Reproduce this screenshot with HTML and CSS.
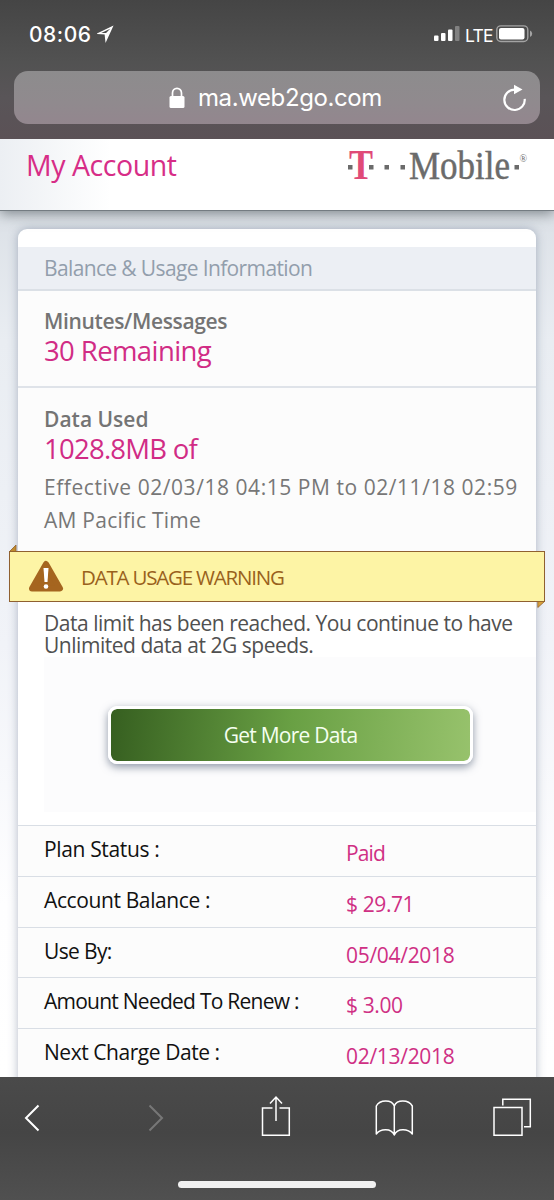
FILE: index.html
```html
<!DOCTYPE html>
<html lang="en">
<head>
<meta charset="utf-8">
<title>My Account</title>
<link rel="stylesheet" href="styles.css">
</head>
<body>
<div class="phone">
  <div class="chrome">
    <div class="status">
      <span class="time">08:06</span>
      <svg class="loc" width="18" height="18" viewBox="0 0 18 18"><path d="M1.8 8.4 15 2 9 15.200 8.300 8.800Z" fill="none" stroke="#fff" stroke-width="1.500"/><path d="M8.300 8.800 15 2 9 15Z" fill="#fff"/></svg>
      <span class="spacer"></span>
      <svg width="27" height="18" viewBox="0 0 27 18"><g fill="#fff"><rect x="0" y="10.500" width="4.500" height="5.500" rx="1"/><rect x="7" y="8" width="4.500" height="8" rx="1"/><rect x="14" y="4.500" width="4.500" height="11.500" rx="1"/><rect x="21" y="1" width="4.500" height="15" rx="1" opacity=".3"/></g></svg>
      <span class="lte">LTE</span>
      <svg class="battery" width="37" height="18" viewBox="0 0 37 18"><rect x=".8" y=".9" width="31" height="15.600" rx="4" fill="none" stroke="#a3a3a3" stroke-width="1.400"/><rect x="3" y="3" width="25.500" height="11.400" rx="2" fill="#fff"/><path d="M34 5.500q2.200 1 2.200 3.200T34 12Z" fill="#a3a3a3"/></svg>
    </div>
    <div class="address">
      <svg class="lock" width="16" height="22" viewBox="0 0 16 22"><path d="M3.500 10V6a4.500 4.700 0 0 1 9 0V10" fill="none" stroke="#fff" stroke-width="1.700"/><rect x=".5" y="9" width="15" height="12" rx="1.500" fill="#fff"/></svg>
      <span class="url">ma.web2go.com</span>
      <svg class="reload" width="26" height="28" viewBox="0 0 26 28"><path d="M22.700 14.800A10.200 10.200 0 1 1 12.500 5.600h2" fill="none" stroke="#fff" stroke-width="2.200"/><path d="M12 .8 20.500 5.600 12 10.200Z" fill="#fff"/></svg>
    </div>
  </div>
  <header class="header">
    <h1>My Account</h1>
    <svg class="logo" width="184" height="44" viewBox="0 0 184 44">
      <text class="logo-t" x="3" y="34" textLength="24" lengthAdjust="spacingAndGlyphs">T</text>
      <g fill="#6b6b6b"><rect x="2" y="20" width="4.500" height="4.500"/><rect x="23" y="20" width="4.500" height="4.500"/><rect x="38.500" y="20" width="4.500" height="4.500"/><rect x="54.500" y="20" width="4.500" height="4.500"/><rect x="168.500" y="20" width="4.500" height="4.500"/></g>
      <text class="logo-m" x="63" y="34" textLength="101" lengthAdjust="spacingAndGlyphs">Mobile</text>
      <text class="logo-r" x="173.500" y="17">®</text>
    </svg>
  </header>
  <main class="page">
    <section class="card">
      <h2 class="band"><span class="t-band">Balance &amp; Usage Information</span></h2>
      <div class="usage minutes">
        <div class="label"><span class="t-min">Minutes/Messages</span></div>
        <div class="amount"><span class="t-rem">30 Remaining</span></div>
      </div>
      <div class="usage data">
        <div class="label"><span class="t-du">Data Used</span></div>
        <div class="amount"><span class="t-mb">1028.8MB of</span></div>
        <div class="dates"><span class="t-eff">Effective 02/03/18 04:15 PM to 02/11/18 02:59</span><br><span class="t-am">AM Pacific Time</span></div>
      </div>
      <div class="warning">
        <svg class="fold fold-l" width="8" height="8" viewBox="0 0 8 8"><path d="M.5 7.500 7 1v6.500Z" fill="#c08a2c" stroke="#8f5f2b" stroke-width=".8"/></svg>
        <svg class="sign" width="36" height="33" viewBox="0 0 36 33"><path d="M18 4 32 28.500H4Z" fill="#a5651f" stroke="#a5651f" stroke-width="6" stroke-linejoin="round"/><path d="M15.500 8h5l-1 14h-3Z" fill="#fff"/><circle cx="18" cy="26.500" r="2.300" fill="#fff"/></svg>
        <span class="t-warn">DATA USAGE WARNING</span>
        <svg class="fold fold-r" width="8" height="8" viewBox="0 0 8 8"><path d="M.8.5H7.500L.8 6.500Z" fill="#d9a23c" stroke="#8f5f2b" stroke-width=".8"/></svg>
      </div>
      <div class="limit">Data limit has been reached. You continue to have<br>Unlimited data at 2G speeds.</div>
      <div class="more"><button class="cta">Get More Data</button></div>
      <dl class="rows">
        <div class="row"><dt class="r1">Plan Status :</dt><dd class="v1">Paid</dd></div>
        <div class="row"><dt class="r2">Account Balance :</dt><dd class="v2">$ 29.71</dd></div>
        <div class="row"><dt class="r3">Use By:</dt><dd class="v3">05/04/2018</dd></div>
        <div class="row"><dt class="r4">Amount Needed To Renew :</dt><dd class="v2">$ 3.00</dd></div>
        <div class="row"><dt class="r5">Next Charge Date :</dt><dd class="v3">02/13/2018</dd></div>
      </dl>
    </section>
  </main>
  <nav class="toolbar">
    <div class="icons">
      <svg width="46" height="44" viewBox="0 0 46 44"><path d="M26.500 10.500 14 23l12.500 12.500" fill="none" stroke="#fff" stroke-width="2"/></svg>
      <svg width="42" height="44" viewBox="0 0 42 44"><path d="M13.500 10.500 26 23 13.500 35.500" fill="none" stroke="#777" stroke-width="2"/></svg>
      <svg width="40" height="44" viewBox="0 0 40 44"><path d="M16.500 13H6.500V40.300H33.300V13H23.500M20 26V2.500M14 8.500 20 2l6 6.500" fill="none" stroke="#fff" stroke-width="1.500"/></svg>
      <svg width="40" height="44" viewBox="0 0 40 44"><path d="M20.300 11C17.500 4.300 6 4.500 2.300 11V39C6 34 17 32.500 20.300 40 23.500 32.500 34.500 34 38.300 39V11C34.500 4.500 23 4.300 20.300 11V40" fill="none" stroke="#fff" stroke-width="1.500" stroke-linejoin="round"/></svg>
      <svg width="40" height="44" viewBox="0 0 40 44"><path d="M2 12.500H30V40.300H2ZM10.800 10.500V4.300H38.300V31.800H32" fill="none" stroke="#fff" stroke-width="1.500"/></svg>
    </div>
    <div class="home"></div>
  </nav>
</div>
</body>
</html>
```
FILE: styles.css
```css
* { box-sizing: border-box; margin: 0; padding: 0; }
body { font: 21px "Open Sans", "Noto Sans", sans-serif; }
svg { display: block; flex: none; }
.phone { width: 554px; height: 1200px; overflow: hidden; display: flex; flex-direction: column; }

.chrome { height: 139px; flex: none; padding: 0 14px; background: linear-gradient(#454545, #525252 45%, #595558 70%, #5b5156); color: #fff; font-family: Inter, sans-serif; position: relative; z-index: 3; }
.status { height: 71px; padding: 0 7px 3px 15px; display: flex; align-items: center; }
.time { font-size: 21px; font-weight: 500; letter-spacing: .5px; width: 68px; white-space: nowrap; }
.spacer { flex: 1; }
.lte { font-size: 17.500px; font-weight: 400; width: 29px; margin-left: 4px; letter-spacing: -.7px; padding-top: 2px; }
.battery { margin-left: 2px; }
.address { height: 53px; border-radius: 14px; background: linear-gradient(#8d8c8d, #908a8e 60%, #93868e); display: flex; align-items: center; padding: 0 12px 0 155px; }
.url { font-size: 24px; font-weight: 400; letter-spacing: -.4px; margin-left: 13px; flex: 1; line-height: 50px; white-space: nowrap; }

.header { height: 72px; flex: none; display: flex; justify-content: space-between; padding-left: 26px; padding-right: 24px; border-bottom: 1.500px solid #747c82; background: linear-gradient(90deg, #eceff3, #fff 20%); box-shadow: 0 3px 12px rgba(70,80,85,.6); position: relative; z-index: 2; }
.header h1 { font-size: 28.500px; font-weight: 400; letter-spacing: -.45px; line-height: 53px; color: #d72d87; }
.logo { margin-top: 6px; font-family: "Liberation Serif", serif; overflow: visible; }
.logo-t { font-size: 43px; font-weight: 700; fill: #e04a78; }
.logo-m { font-size: 40.500px; fill: #6b6b6b; stroke: #6b6b6b; stroke-width: .5px; }
.logo-r { font-size: 10px; fill: #6b6b6b; }

.page { flex: 1; min-height: 0; padding: 18px 18px 0; background: linear-gradient(#dce1e7, #e9edf2 15%, #f1f3f8 50%, #fefeff 80%, #fff); }
.card { height: 900px; padding-top: 18px; border-radius: 9px; background: #fff; box-shadow: 0 0 10px rgba(105,120,145,.5); white-space: nowrap; }
.band { height: 44px; font-size: 21px; font-weight: 400; letter-spacing: -.63px; line-height: 43px; padding-left: 26px; color: #929eac; background: #eceff4; border-bottom: 2px solid #dbe0e6; }
.usage { padding-left: 26px; background: #fcfcfc; color: #777; }
.minutes { height: 97px; padding-top: 15px; border-bottom: 2px solid #dfe3e9; }
.data { height: 163px; padding-top: 16px; }
.label { line-height: 30px; font-weight: 600; color: #747474; }
.amount { line-height: 30px; font-size: 27.500px; color: #d12c85; }
.dates { margin-top: 7px; line-height: 32.500px; }
.t-min { letter-spacing: -.35px; }
.t-rem { letter-spacing: -.6px; }
.t-mb { letter-spacing: -.75px; }
.t-eff { letter-spacing: .55px; }
.t-am { letter-spacing: .25px; }
.t-warn { font-size: 20.500px; letter-spacing: -1.200px; }
.warning { position: relative; height: 51px; margin: 0 -9px; padding-left: 18px; display: flex; align-items: center; gap: 17px; background: #fdf4a5; border: 1.500px solid #8f6030; color: #99611c; }
.fold { position: absolute; }
.fold-l { left: -1px; top: -8px; }
.fold-r { right: -1px; bottom: -8px; }
.limit { height: 55px; padding: 10px 0 0 26px; line-height: 22px; letter-spacing: -.47px; color: #505050; }
.more { height: 155px; margin: 0 0 13px 26px; padding: 49px 0 0 64px; background: #fcfcfd; }
.cta { display: block; width: 365px; height: 58px; border: 3px solid #fff; border-radius: 9px; background: linear-gradient(95deg, #365f20, #69a044 50%, #97c26c) padding-box; box-shadow: 0 3px 8px rgba(70,85,110,.6); font: inherit; line-height: 51px; letter-spacing: -.75px; color: #f5fff0; }
.row { height: 50.800px; display: grid; grid-template-columns: 302px 1fr; padding-left: 26px; border-top: 1.500px solid #d9dee5; background: #fcfcfc; }
dt { line-height: 46px; color: #111; }
dd { padding-top: 10px; line-height: 34px; color: #cf3084; }
.r1 { letter-spacing: -.35px; }
.r2 { letter-spacing: -.38px; }
.r3 { letter-spacing: -.65px; }
.r4 { letter-spacing: -.75px; }
.r5 { letter-spacing: -.45px; }
.v1 { letter-spacing: -.9px; }
.v2 { letter-spacing: -.4px; }
.v3 { letter-spacing: -.3px; }

.toolbar { height: 123px; flex: none; background: linear-gradient(#4a4a4a, #454545 45%, #505050); position: relative; z-index: 3; padding-top: 18px; }
.icons { display: flex; gap: 78px; padding-left: 12px; }
.home { width: 198px; height: 7px; margin: 42px auto 0; border-radius: 4px; background: #f1f1f1; }
```
